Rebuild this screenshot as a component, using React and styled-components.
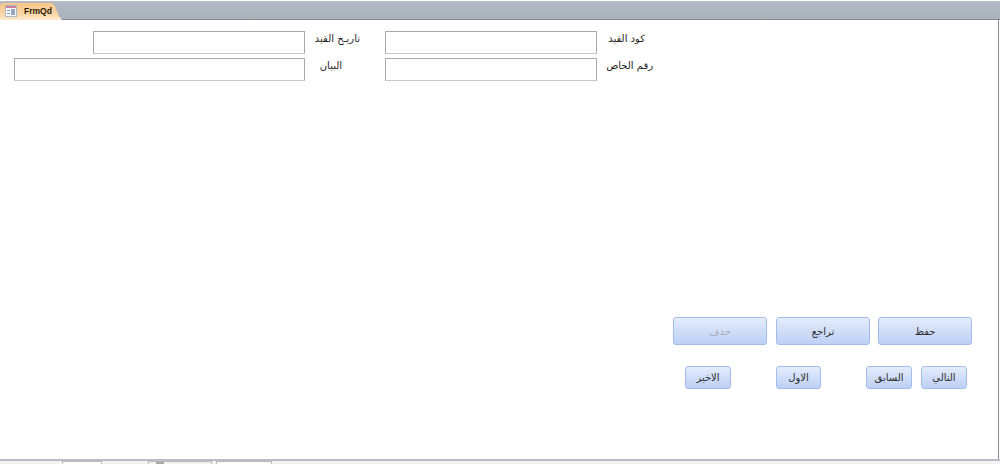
import React from 'react'
import styled, { createGlobalStyle } from 'styled-components'

const Global = createGlobalStyle`
  html, body { margin: 0; padding: 0; background: #fff; }
  body { width: 1000px; height: 464px; overflow: hidden; font-family: "DejaVu Sans", "Noto Sans", sans-serif; }
`
const Window = styled.div`
  width: 1000px;
  height: 464px;
  display: flex;
  flex-direction: column;
  overflow: hidden;
`
const TabStrip = styled.div`
  height: 18px;
  margin-top: 1px;
  display: flex;
  align-items: flex-end;
  background: linear-gradient(#b3bac4, #a9b1bc);
  border-bottom: 1px solid #85888e;
`
const Tab = styled.div`
  box-sizing: border-box;
  width: 62px;
  height: 17px;
  margin-bottom: -1px;
  padding: 0 0 1px 5px;
  display: flex;
  align-items: center;
  gap: 7px;
  background: linear-gradient(#f6c685, #f9d5a3 60%, #fdeacf);
  clip-path: polygon(0 2px, 2px 0, 52px 0, 55px 3px, 59px 13px, 62px 17px, 0 17px);
  font: bold 8.5px "Liberation Sans", sans-serif;
  color: #2a1c08;
`
const FormBody = styled.div`
  flex: 1;
  display: flex;
  flex-direction: column;
  border-right: 1px solid #fff;
  box-shadow: inset -1px 0 0 #85888e;
`
const Fields = styled.div`
  display: grid;
  grid-template-columns: 291px 80px 212px 120px;
  grid-auto-rows: 23px;
  row-gap: 4px;
  margin: 11px 0 0 14px;
`
const Field = styled.div`
  box-sizing: border-box;
  border: 1px solid #a9a9a9;
  border-bottom-color: #c9c9c9;
  background: #fff;
  margin-left: ${props => props.inset || 0}px;
`
const Label = styled.div`
  direction: rtl;
  font-size: 10px;
  line-height: 14px;
  padding-top: 1px;
  color: #222;
  padding-right: ${props => props.right}px;
  white-space: nowrap;
`
const Actions = styled.div`
  margin: 236px 0 0 673px;
  display: flex;
`
const Nav = styled.div`
  margin: 21px 0 0 685px;
  display: flex;
`
const Button = styled.div`
  box-sizing: border-box;
  width: ${props => props.width}px;
  height: ${props => props.small ? 23 : 28}px;
  margin-left: ${props => props.shift || 0}px;
  border: 1px solid #a3bdea;
  border-radius: 3px;
  background: linear-gradient(#e4ecfb, #bdcff5);
  display: flex;
  align-items: center;
  justify-content: center;
  font-size: 10px;
  color: ${props => props.disabled ? '#a8aeb8' : '#2c2c2c'};
  direction: rtl;
`
const StatusBar = styled.div`
  height: 3px;
  border-top: 2px solid #bcbcc2;
  background: #f3f3f6;
  display: flex;
`
const StatusCell = styled.div`
  box-sizing: border-box;
  width: ${props => props.width}px;
  margin-left: ${props => props.left}px;
  border: 1px solid #b8b8b8;
  border-bottom: 0;
  background: ${props => props.fill || '#fff'};
  display: flex;
  padding-left: 7px;
`
const StatusGlyph = styled.div`
  width: 8px;
  height: 3px;
  background: #a6a6a6;
`

const FormIcon = () => (
  <svg width="12" height="12" viewBox="0 0 12 12">
    <rect x="0.5" y="0.5" width="11" height="11" fill="#f6f7fb" stroke="#b0b8c6" />
    <rect x="1" y="1" width="10" height="2" fill="#cf7f96" />
    <rect x="2" y="5" width="3" height="1" fill="#8b99b2" />
    <rect x="2" y="8" width="3" height="1" fill="#8b99b2" />
    <rect x="6" y="4" width="4" height="6" fill="#98a7c0" />
  </svg>
)

export default function App() {
  return (
    <Window>
      <Global />
      <TabStrip>
        <Tab><FormIcon />FrmQd</Tab>
      </TabStrip>
      <FormBody>
        <Fields>
          <Field inset={79} />
          <Label right={25}>تاريـخ القيد</Label>
          <Field />
          <Label right={72}>كود القيد</Label>
          <Field />
          <Label right={43}>البيان</Label>
          <Field />
          <Label right={64}>رقم الخاص</Label>
        </Fields>
        <Actions>
          <Button width={94} disabled>حذف</Button>
          <Button width={94} shift={9}>تراجع</Button>
          <Button width={94} shift={8}>حفظ</Button>
        </Actions>
        <Nav>
          <Button small width={46}>الاخير</Button>
          <Button small width={45} shift={45}>الاول</Button>
          <Button small width={46} shift={45}>السابق</Button>
          <Button small width={46} shift={9}>التالي</Button>
        </Nav>
      </FormBody>
      <StatusBar>
        <StatusCell left={62} width={40} />
        <StatusCell left={46} width={64} fill="#f3f3f6"><StatusGlyph /></StatusCell>
        <StatusCell left={4} width={56} />
      </StatusBar>
    </Window>
  )
}
